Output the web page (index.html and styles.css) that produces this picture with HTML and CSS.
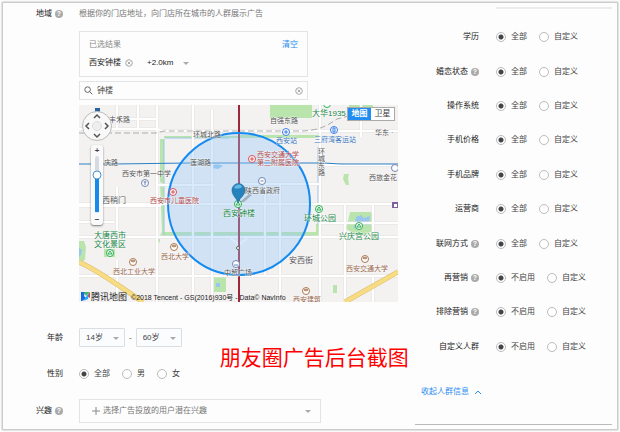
FILE: index.html
```html
<!DOCTYPE html>
<html lang="zh-CN">
<head>
<meta charset="utf-8">
<meta name="viewport" content="width=device-width, initial-scale=1">
<title>朋友圈广告</title>
<link rel="stylesheet" href="styles.css">
</head>
<body>
<main class="panel">
  <section class="left">
    <div class="field region">
      <div class="label">地域 <span class="help">?</span></div>
      <div class="region-body">
        <p class="hint">根据你的门店地址，向门店所在城市的人群展示广告</p>
        <div class="result">
          <div class="result-head"><span>已选结果</span><button class="text-button" type="button">清空</button></div>
          <div class="result-item">
            <span>西安钟楼</span>
            <button class="clear" type="button" aria-label="移除"><svg viewBox="0 0 8 8"><circle cx="4" cy="4" r="3.3"/><path d="M2.6 2.6l2.8 2.8M5.4 2.6L2.6 5.4"/></svg></button>
            <span class="select distance"><select aria-label="范围"><option>+2.0km</option></select></span>
          </div>
        </div>
        <div class="search">
          <svg class="search-icon" viewBox="0 0 9 9"><circle cx="3.6" cy="3.6" r="2.8"/><path d="M5.7 5.7L8.3 8.3"/></svg>
          <input type="text" value="钟楼" aria-label="搜索地点">
          <button class="clear" type="button" aria-label="清除"><svg viewBox="0 0 8 8"><circle cx="4" cy="4" r="3.3"/><path d="M2.6 2.6l2.8 2.8M5.4 2.6L2.6 5.4"/></svg></button>
        </div>
        <div class="map">
          <svg class="map-canvas" viewBox="0 0 319 197">
            <rect width="319" height="197" fill="#f4f1f1"/>
            <g class="green">
              <path d="M191 0h42v13h-42zM270 0h24v2h-24zM0 136h5l2 6-1 13-6 3z"/>
              <path d="M271 107h20l4 2-1 17-10 4-8-1-9-5 3-12zM254 180h4v8h-4zM25 144h11v8H25zM135 172h12v15h-12zM265 69h5l-1 4 1 7h-3l-3-6zM77 134h4v4z"/>
              <path d="M81 34h4v45l-4-2zM81 79l4 4v44h76v4H81l2-5zM161 127h76v-8h4v12h-80zM85 31h75v2H85zM160 30h81v3h-81zM240 33h2v88h-2z"/>
            </g>
            <g class="water">
              <path d="M85 34v97h149M239 42v78M86 33h64"/>
              <path class="fill" d="M277 112l5-2 3 3 6-2-1 9-5-1-4 6-6-2zM0 143l3 2-1 5-2 2zM137 178h4v4h-4zM131 61c4-2 10-2 13 0l-5 3-6-1z"/>
            </g>
            <g class="road-edge">
              <path d="M0 24h79l4 2h236M0 101h82M79 80h56M161 79h80M0 99h319M0 132h319M0 171h319M0 117h35M43 14h35M242 60h77M242 118h77M38 0v25M59 0v24M38 82v55M38 155v42M78 0v197M114 0v197M133 5v187M186 79v92M201 79v118M241 0v197M266 99v98M282 0v32M294 98v35M294 171v26"/>
            </g>
            <g class="road">
              <path d="M0 24h79l4 2h236M0 101h82M79 80h56M161 79h80M0 99h319M0 132h319M0 171h319M0 117h35M43 14h35M242 60h77M242 118h77M38 0v25M59 0v24M38 82v55M38 155v42M78 0v197M114 0v197M133 5v187M186 79v92M201 79v118M241 0v197M266 99v98M282 0v32M294 98v35M294 171v26"/>
              <path d="M152 132c0 5 8 4 8 10M168 132c0 5-8 4-8 10"/>
            </g>
            <path d="M160 26h64c18-1 25-6 34-12l20-5" class="rail"/>
            <path d="M0 28h77l8-2h75" class="rail"/>
            <path d="M0 157C24 168 44 184 64 197M266 197l53-30" fill="none" stroke="#d9bc6b" stroke-width="5"/>
            <path d="M0 157C24 168 44 184 64 197M266 197l53-30" fill="none" stroke="#f8dc83" stroke-width="4"/>
            <path d="M0 59h35l75-1h132c8 0 14 1 22 1h55" fill="none" stroke="#2d80c6"/>
            <path d="M160 0v197" stroke="#9d263d" stroke-width="2"/>
            <circle cx="160" cy="99" r="71" fill="#90c8f8" fill-opacity=".36" stroke="#138af0" stroke-width="2"/>
            <g class="place">
              <text x="30" y="17">丰禾路</text><text x="114" y="32">环城北路</text><text x="25" y="60">庆路</text><text x="111" y="60">莲湖路</text>
              <text x="43" y="71">西安市第一中学</text><text class="large" x="23" y="98">西稍门</text>
              <text x="191" y="18">自强东路</text><text x="296" y="30">华东 ·</text>
              <text x="239" y="49">环</text><text x="239" y="56">城</text><text x="239" y="63">东</text><text x="239" y="70">路</text>
              <text x="290" y="75">西旅金花</text><text x="166" y="88">陕西省政府</text><text class="large" x="210" y="158">安西街</text><text x="145" y="170">中贸广场</text>
            </g>
            <g class="place red">
              <text x="71" y="98">西安市儿童医院</text><text x="178" y="52">西安交通大学</text><text x="178" y="60">第二附属医院</text>
            </g>
            <g class="place blue"><text x="197" y="38">西安站</text><text x="235" y="37">三府湾客运站</text></g>
            <g class="place leaf">
              <text class="large" x="233" y="11">大华1935</text><text class="large" x="15" y="133">大唐西市</text><text class="large" x="15" y="142">文化景区</text><text class="large" x="144" y="111">西安钟楼</text>
              <text class="large" x="225" y="116">环城公园</text><text class="large" x="260" y="134">兴庆宫公园</text>
            </g>
            <g class="place brown">
              <text x="82" y="154">西北大学</text><text x="34" y="169">西北工业大学</text><text x="267" y="166">西安交通大学</text><text x="214" y="197">西安建筑</text>
            </g>
            <g class="marks">
              <g stroke="#7184b2"><circle cx="66" cy="78" r="3.5"/><circle cx="183" cy="76" r="3.5"/><circle cx="157" cy="159" r="3.5"/><circle cx="316" cy="63" r="3.5"/><path d="M64.5 77h3M66 76v4M181.500 76h3M155 160h4"/></g>
              <g stroke="#387de2"><circle cx="207" cy="27" r="3.5"/><circle cx="255" cy="25" r="3.5"/><path d="M205 27h4M207 25v4M254 23h2v4h-2z"/></g>
              <g stroke="#d94c55"><circle cx="94" cy="87" r="3.5"/><circle cx="173" cy="54" r="3.5"/><path d="M92 87h4M94 85v4M171 54h4M173 52v4"/></g>
              <g stroke="#28ae53"><circle cx="31" cy="148" r="3.5"/><circle cx="240" cy="104" r="3.5"/><circle cx="280" cy="121" r="3.5"/><circle cx="159" cy="99" r="3.5"/><circle cx="248" cy="-1" r="3.5"/><path d="M29 149l2-3 2 3zM238 105l2-3 2 3zM278 122l2-3 2 3zM157 100l2-3 2 3z"/></g>
              <g stroke="#a77952"><circle cx="95" cy="142" r="3.5"/><circle cx="54" cy="157" r="3.5"/><circle cx="286" cy="154" r="3.5"/><circle cx="227" cy="186" r="3.5"/><path d="M93 141l2-1 2 1-2 1zM52 156l2-1 2 1-2 1zM284 153l2-1 2 1-2 1zM225 185l2-1 2 1-2 1z"/></g>
              <circle cx="159" cy="143" r="1.500" stroke="#666"/>
            </g>
            <rect x="313" y="97" width="6" height="6" fill="#80609b"/>
            <path d="M315 99h3v3h-3z" fill="#fff"/>
            <path d="M161 97l9-8 3 1-8 7z" fill="#456" opacity=".35"/>
            <path d="M159 98c-1-5-6-7-6-13a6.500 6.500 0 0 1 13 0c0 6-6 8-7 13z" fill="#2582bd" stroke="#17669b" stroke-width=".6"/>
            <path d="M155 83c1-4 7-5 8-1-2 2-5 2-8 1z" fill="#62b8e5"/>
            <path d="M2 187h4l-1 4 2 2-4 3H2z" fill="#1769e0"/><path d="M5 187h6l-4 4z" fill="#35bb6b"/><path d="M11 187v6l-3-2z" fill="#d94242"/><path d="M10 188l-6 8 5-2z" fill="#23a5ff"/>
            <text class="brand" x="12" y="195">腾讯地图</text>
            <text class="copyright" x="52" y="195">©2018 Tencent - GS(2016)930号 - Data© NavInfo</text>
          </svg>
          <div class="map-types"><button class="active" type="button">地图</button><button type="button">卫星</button></div>
          <button class="compass" type="button" aria-label="平移地图"><svg viewBox="0 0 32 36"><path d="M14 2h5v4h-5z" fill="#2465a1"/><circle cx="16" cy="20" r="14.500" fill="#f8f8f8" stroke="#bbb"/><circle cx="16" cy="20" r="4.500" fill="#eee" stroke="#ddd"/><path d="M13 12l3-3 3 3M13 28l3 3 3-3M8 17l-3 3 3 3M24 17l3 3-3 3" fill="none" stroke="#555" stroke-width="1.500"/></svg></button>
          <div class="zoom">
            <button type="button" aria-label="放大">+</button>
            <svg viewBox="0 0 12 58"><rect x="4" y="0" width="4" height="57" rx="2" fill="#d4dbe2"/><path d="M6 20v36" stroke="#168bec" stroke-width="4"/><circle cx="6" cy="19" r="4" fill="#fff" stroke="#4896d8"/></svg>
            <button type="button" aria-label="缩小">−</button>
          </div>
        </div>
      </div>
    </div>
    <div class="profile">
      <div class="profile-fields">
        <div class="field">
          <div class="label">年龄</div>
          <div class="ages"><span class="select box"><select aria-label="最小年龄"><option>14岁</option></select></span><span>-</span><span class="select box"><select aria-label="最大年龄"><option>60岁</option></select></span></div>
        </div>
        <div class="field">
          <div class="label">性别</div>
          <div class="options"><label><input type="radio" name="sex" checked>全部</label><label><input type="radio" name="sex">男</label><label><input type="radio" name="sex">女</label></div>
        </div>
      </div>
      <h1>朋友圈广告后台截图</h1>
    </div>
    <div class="field interests">
      <div class="label">兴趣 <span class="help">?</span></div>
      <button class="interest" type="button"><svg viewBox="0 0 8 8"><path d="M4 0v8M0 4h8"/></svg><span>选择广告投放的用户潜在兴趣</span><i class="arrow"></i></button>
    </div>
  </section>
  <section class="right">
    <div class="top-line"></div>
    <div class="rows">
      <div class="field"><div class="label">学历</div><div class="options"><label><input type="radio" name="r1" checked>全部</label><label><input type="radio" name="r1">自定义</label></div></div>
      <div class="field"><div class="label">婚恋状态 <span class="help">?</span></div><div class="options"><label><input type="radio" name="r2" checked>全部</label><label><input type="radio" name="r2">自定义</label></div></div>
      <div class="field"><div class="label">操作系统</div><div class="options"><label><input type="radio" name="r3" checked>全部</label><label><input type="radio" name="r3">自定义</label></div></div>
      <div class="field"><div class="label">手机价格</div><div class="options"><label><input type="radio" name="r4" checked>全部</label><label><input type="radio" name="r4">自定义</label></div></div>
      <div class="field"><div class="label">手机品牌</div><div class="options"><label><input type="radio" name="r5" checked>全部</label><label><input type="radio" name="r5">自定义</label></div></div>
      <div class="field"><div class="label">运营商</div><div class="options"><label><input type="radio" name="r6" checked>全部</label><label><input type="radio" name="r6">自定义</label></div></div>
      <div class="field"><div class="label">联网方式 <span class="help">?</span></div><div class="options"><label><input type="radio" name="r7" checked>全部</label><label><input type="radio" name="r7">自定义</label></div></div>
      <div class="field"><div class="label">再营销 <span class="help">?</span></div><div class="options"><label><input type="radio" name="r8" checked>不启用</label><label><input type="radio" name="r8">自定义</label></div></div>
      <div class="field"><div class="label">排除营销 <span class="help">?</span></div><div class="options"><label><input type="radio" name="r9" checked>不启用</label><label><input type="radio" name="r9">自定义</label></div></div>
      <div class="field"><div class="label">自定义人群</div><div class="options"><label><input type="radio" name="r10" checked>不启用</label><label><input type="radio" name="r10">自定义</label></div></div>
    </div>
    <a class="collapse" href="#">收起人群信息 <svg viewBox="0 0 8 5"><path d="M1 4l3-3 3 3"/></svg></a>
  </section>
</main>
</body>
</html>
```
FILE: styles.css
```css
* { box-sizing: border-box; }
body { margin: 0; padding: 2px; background: #fff; color: #444; font: 8px/12px "Liberation Sans", "Noto Sans CJK SC", sans-serif; }
button, input, select { font: inherit; color: inherit; margin: 0; padding: 0; border: 0; background: none; }
button, select { cursor: pointer; }
p, h1 { margin: 0; font-weight: 400; }
svg { display: block; }

.panel { display: grid; grid-template-columns: minmax(0, 412fr) minmax(0, 202fr); min-height: 427px; background: #fdfdfd; border: 1px solid #ccc; box-shadow: 0 0 2px #aaa; }
.field { display: grid; grid-template-columns: 60px minmax(0, 1fr); column-gap: 16px; align-items: center; }
.label { display: flex; align-items: center; justify-content: flex-end; gap: 3px; white-space: nowrap; color: #222; }
.help { width: 8px; height: 8px; border-radius: 50%; background: #aaa; color: #fff; font-size: 7px; line-height: 8px; text-align: center; font-weight: 700; }

.left { padding: 5px 17px 6px 0; }
.region { align-items: start; }
.hint { color: #777; }
.result { width: 229px; height: 46px; margin-top: 11px; padding: 7px 9px; border: 1px solid #e2e4e7; }
.result-head { display: flex; justify-content: space-between; color: #888; }
.text-button { color: #2b8cf0; }
.result-item { display: flex; align-items: center; margin-top: 6px; gap: 4px; color: #222; }
.clear { width: 8px; height: 8px; }
.clear svg { width: 8px; height: 8px; fill: none; stroke: #aaa; }
.select { position: relative; display: inline-flex; }
.select select { width: 100%; appearance: none; }
.select::after, .arrow { content: ""; border: 3px solid transparent; border-top-color: #aaa; border-bottom: 0; }
.select::after { position: absolute; right: 5px; top: 50%; margin-top: -1px; pointer-events: none; }
.distance { width: 42px; margin-left: 10px; }
.distance::after { right: 0; }
.search { display: flex; align-items: center; width: 229px; height: 19px; margin-top: 4px; padding: 0 4px; border: 1px solid #e2e4e7; }
.search input { flex: 1; min-width: 0; margin-left: 4px; outline: 0; }
.search-icon { width: 9px; height: 9px; fill: none; stroke: #666; }

.map { position: relative; margin-top: 5px; overflow: hidden; }
.map-canvas { width: 100%; height: auto; }
.green { fill: #b9e5ac; }
.water { fill: none; stroke: #9ac5ed; stroke-width: 1; }
.water .fill { fill: #9ac5ed; stroke: none; }
.road-edge { fill: none; stroke: #e3e2e2; stroke-width: 3; }
.road { fill: none; stroke: #fff; stroke-width: 2; }
.rail { fill: none; stroke: #aaa; stroke-dasharray: 6 3; }
.place { font-size: 7px; fill: #555; paint-order: stroke; stroke: #fff; stroke-opacity: .6; }
.place .large { font-size: 8px; }
.red { fill: #b44b4b; }
.blue { fill: #3977bd; }
.leaf { fill: #168746; }
.brown { fill: #98694b; }
.marks { fill: #fff; }
.brand { font-size: 9px; fill: #222; }
.copyright { font-size: 7px; fill: #222; }
.map-types { position: absolute; top: 2px; right: 3px; display: flex; border: 1px solid #aaa; background: #fff; }
.map-types button { width: 23px; height: 12px; line-height: 12px; }
.map-types .active { background: #218df0; color: #fff; font-weight: 700; }
.compass { position: absolute; left: 2px; top: 1px; width: 32px; height: 36px; }
.zoom { position: absolute; left: 12px; top: 40px; display: flex; flex-direction: column; align-items: center; width: 12px; height: 80px; border-radius: 3px; background: #fafafa; box-shadow: 0 1px 2px #777; }
.zoom button { width: 12px; height: 11px; line-height: 11px; font-weight: 700; }
.zoom svg { width: 12px; height: 58px; }

.profile { display: flex; align-items: flex-end; gap: 38px; margin-top: 26px; }
.profile-fields { flex: none; }
.profile-fields .field + .field { margin-top: 21px; }
.profile h1 { color: #f00; font-size: 21px; line-height: 24px; padding-bottom: 10px; white-space: nowrap; }
.ages { display: flex; align-items: center; gap: 4px; }
.box { width: 46px; height: 19px; border: 1px solid #dadde2; border-radius: 1px; background: #fbfcfd; }
.box select { padding-left: 6px; }
.options { display: flex; align-items: center; gap: 12px; }
.options label { display: flex; align-items: center; gap: 5px; white-space: nowrap; }
.options input { appearance: none; width: 10px; height: 10px; border: 1px solid #bbb; border-radius: 50%; background: #fff; }
.options input:checked { background: radial-gradient(circle, #444 0 2px, #fff 3px); }
.interests { margin-top: 19px; }
.interest { display: flex; align-items: center; gap: 3px; width: 242px; height: 24px; padding: 0 9px 0 12px; border: 1px solid #e2e4e7; color: #777; }
.interest svg { width: 8px; height: 8px; stroke: #888; }
.arrow { margin-left: auto; }

.right { display: flex; flex-direction: column; margin-right: 5px; margin-bottom: 4px; padding-top: 4px; border-bottom: 1px solid #bbb; }
.top-line { height: 2px; margin-left: 81px; background: #ececec; }
.rows { display: grid; grid-template-rows: repeat(10, 1fr); height: 344px; margin-top: 11px; }
.rows .field { grid-template-columns: 64px minmax(0, 1fr); column-gap: 17px; }
.collapse { display: flex; align-items: center; gap: 5px; margin: 22px 0 0 6px; color: #2b8cf0; text-decoration: none; }
.collapse svg { width: 8px; height: 5px; fill: none; stroke: #2b8cf0; }
```
